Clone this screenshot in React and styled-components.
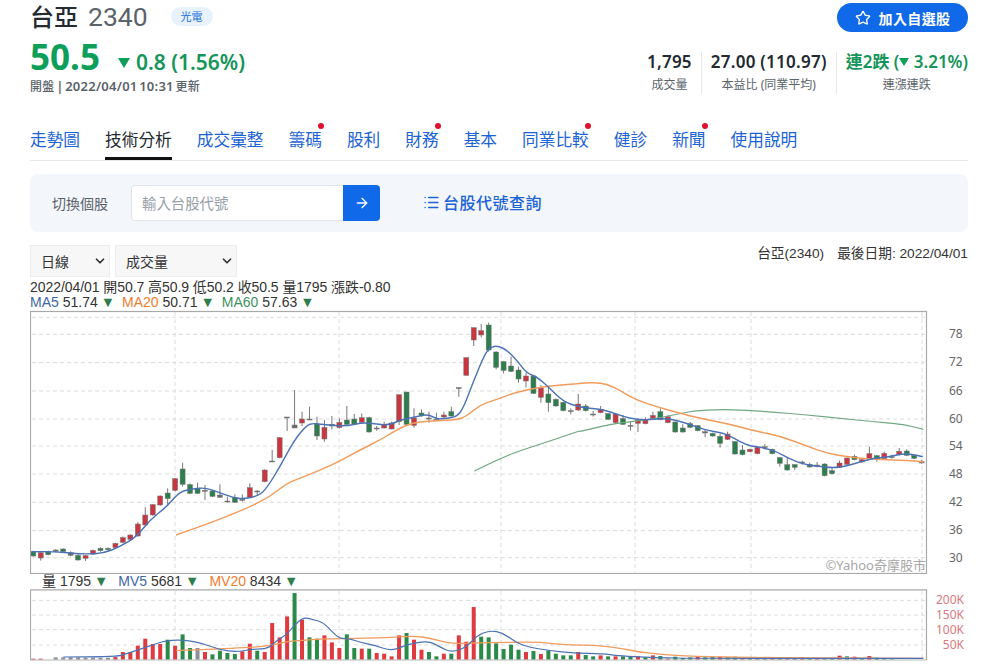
import React from 'react'
import styled, { createGlobalStyle } from 'styled-components'
import { Star, ArrowRight, List, ChevronDown } from 'lucide-react'

const RED = '#c8363f'
const GREEN = '#2e7d4c'
const BLUE_LINE = '#4b72b4'
const ORANGE_LINE = '#f29b5c'
const GREEN_LINE = '#6fa883'

const tabs = [
    { name: '走勢圖' },
    { name: '技術分析', active: true },
    { name: '成交彙整' },
    { name: '籌碼', dot: true },
    { name: '股利' },
    { name: '財務', dot: true },
    { name: '基本' },
    { name: '同業比較', dot: true },
    { name: '健診' },
    { name: '新聞', dot: true },
    { name: '使用說明' },
]

// candles: color, body top, body bottom, wick top, wick bottom (y is 3x screen px)
const candles = [
    ['g',724,738,722,740],['r',728,744,726,752],['g',724,734,722,736],['d',720,724,718,726],['g',717,725,715,727],
    ['d',728,736,724,739],['g',736,750,733,752],['r',737,745,735,753],['r',721,732,719,734],['g',715,722,712,725],
    ['g',715,719,712,722],['r',700,713,698,715],['r',683,697,679,700],['r',675,688,673,690],['r',642,678,636,680],
    ['r',615,645,592,647],['r',584,615,582,617],['r',558,585,556,587],['g',549,566,535,585],['r',506,541,504,545],
    ['g',477,523,458,530],['g',524,550,520,553],['g',535,550,518,552],['d',541,544,525,570],['g',543,559,540,561],
    ['d',555,562,523,564],['d',573,575,560,578],['g',563,577,553,579],['d',568,570,553,575],['r',533,562,520,564],
    ['d',543,546,540,558],['r',480,515,478,517],['d',453,456,420,456],['r',383,443,381,445],['d',321,324,321,363],
    ['d',345,354,240,354],['r',327,339,305,348],['d',327,330,290,330],['g',342,378,320,390],['r',352,387,330,395],
    ['d',343,348,318,358],['r',337,353,325,356],['g',330,343,288,348],['g',327,342,312,345],['r',323,337,310,340],
    ['g',323,366,320,368],['d',354,357,348,362],['r',344,354,335,356],['r',339,357,335,358],['r',254,335,254,345],
    ['g',246,343,246,345],['r',324,346,295,353],['g',309,316,298,320],['d',324,327,305,338],['d',328,331,308,333],
    ['r',315,321,305,325],['g',305,318,290,320],['d',233,236,233,260],['r',143,196,142,197],['r',53,90,52,108],
    ['r',62,75,42,82],['g',45,120,38,125],['g',126,172,124,178],['g',155,181,153,190],['g',168,184,140,186],
    ['g',180,207,170,218],['r',198,213,188,232],['g',198,250,196,252],['r',234,262,225,278],['g',252,278,230,305],
    ['g',268,288,265,290],['g',277,302,275,304],['d',302,305,295,313],['r',282,300,252,303],['g',288,302,282,305],
    ['d',312,314,303,320],['r',298,308,288,310],['g',311,328,309,330],['r',312,338,310,342],['g',326,343,315,345],
    ['d',346,349,335,362],['r',331,340,325,366],['r',330,341,322,343],['r',316,325,305,327],['g',305,329,295,331],
    ['r',320,338,316,340],['g',336,366,334,368],['g',354,366,343,368],['g',341,352,336,354],['g',347,362,345,364],
    ['d',365,369,360,382],['g',370,378,368,380],['g',379,400,372,413],['r',372,388,365,390],['g',395,432,393,434],
    ['g',420,434,405,436],['r',418,425,416,427],['r',412,431,410,433],['d',410,413,402,418],['g',418,431,416,433],
    ['g',443,460,441,470],['g',464,480,443,482],['g',464,472,462,480],['d',456,459,452,464],['g',463,471,458,473],
    ['d',465,470,456,472],['g',462,497,460,499],['g',482,491,472,494],['r',459,472,452,474],['r',444,463,442,465],
    ['g',439,449,434,451],['r',449,456,445,458],['r',431,446,410,448],['g',437,447,435,455],['r',430,446,425,448],
    ['d',440,442,434,446],['r',424,434,414,436],['g',423,436,418,438],['g',436,445,434,447],['d',455,459,450,461],
]

// volume bars: color + top (3x screen px, base is 270)
const volumes = [
    ['r',267],['r',267],['n',270],['d',263],['d',263],['d',263],['d',263],['d',264],['d',264],['d',264],['d',264],['r',262],
    ['r',247],['r',247],['r',228],['r',207],['r',223],['r',223],['g',210],['r',228],['g',194],['g',235],['d',235],['r',247],
    ['g',254],['g',243],['g',250],['g',253],['r',245],['r',222],['g',243],['r',247],['r',160],['r',203],['r',140],['g',70],
    ['r',150],['g',203],['g',207],['r',197],['r',218],['r',235],['g',194],['g',235],['r',237],['g',237],['r',250],['r',252],
    ['r',260],['r',197],['g',190],['r',210],['r',240],['g',247],['g',260],['r',252],['g',252],['r',197],['r',216],['r',112],
    ['g',201],['g',203],['g',221],['g',238],['g',225],['g',240],['r',247],['g',244],['r',253],['g',242],['g',252],['g',257],
    ['g',257],['r',247],['g',256],['g',260],['r',257],['g',260],['r',260],['g',260],['g',260],['r',260],['g',263],['r',257],
    ['g',259],['r',267],['g',261],['g',265],['g',263],['r',261],['g',263],['g',262],['r',261],['g',263],['g',261],['r',263],
    ['g',265],['r',266],['g',265],['r',266],['g',262],['r',263],['g',265],['r',262],['g',265],['r',264],['g',266],['g',265],
    ['r',258],['g',260],['r',261],['g',266],['r',259],['g',264],['g',266],['d',267],
]

// 3x crops of the reference, each with its own screen x origin
const ma5 = [
    [20, [[35,725],[100,724],[150,730],[200,732],[250,730],[300,710],[350,680],[390,630],[440,590],[470,555],[490,542],[520,537],[555,533],[590,545],[640,563],[670,567],[715,558],[740,535],[780,470],[820,395],[860,345]]],
    [300, [[40,340],[60,343],[95,346],[140,348],[190,337],[230,343],[270,345],[300,330],[340,322],[385,312],[410,328],[440,325],[470,320],[490,295],[520,215],[555,130],[575,110],[595,108],[620,120],[650,150],[680,190],[710,200],[745,230],[790,275]]],
    [580, [[0,292],[60,298],[90,305],[130,320],[175,330],[220,328],[265,325],[320,340],[375,360],[420,368],[445,375],[480,395],[510,408],[550,413],[590,425],[630,447],[670,463],[710,468],[760,474],[800,468],[840,456],[880,445],[920,442],[960,432],[990,432],[1028,440]]],
]
const ma20 = [
    [20, [[468,675],[540,650],[620,620],[690,590],[750,560],[800,520]]],
    [300, [[0,505],[60,480],[110,458],[180,420],[240,390],[290,360],[320,345],[360,335],[410,332],[470,330],[500,318],[540,285],[590,268],[640,250],[700,235],[750,228],[820,222]]],
    [580, [[0,220],[60,217],[100,230],[130,248],[170,270],[230,290],[300,310],[370,327],[440,340],[520,362],[600,378],[680,408],[740,430],[800,440],[860,446],[920,449],[1000,452],[1030,456]]],
]
const ma60 = [
    [300, [[523,483],[600,445],[680,415],[760,390],[840,362]]],
    [580, [[0,365],[60,350],[120,338],[200,330],[280,315],[340,303],[420,298],[500,301],[580,306],[680,315],[780,325],[880,335],[960,342],[1000,350],[1030,358]]],
]
const mv5 = [
    [20, [[130,262],[285,262],[320,252],[370,235],[400,225],[440,212],[500,211],[550,222],[600,240],[650,247],[700,238],[745,237],[770,212],[800,195],[820,170],[850,142],[880,150],[910,158],[940,190],[960,207]]],
    [340, [[30,207],[60,218],[105,227],[155,244],[200,225],[265,213],[300,232],[335,248],[380,232],[410,198],[450,182],[490,190],[530,220],[570,233],[630,243],[700,250],[790,252],[830,258],[900,262]]],
    [660, [[0,264],[100,266],[790,266]]],
]
const mv20 = [
    [20, [[468,243],[600,238],[745,230],[800,215],[850,212],[900,208]]],
    [340, [[0,207],[100,205],[170,203],[220,199],[270,205],[330,222],[400,220],[500,218],[600,217],[660,225],[790,228],[850,238],[900,247]]],
    [660, [[0,254],[100,260],[300,264],[790,266]]],
]

const priceTicks = [[78,334],[72,362],[66,391],[60,419],[54,446],[48,474],[42,502],[36,530],[30,558]]
const volumeTicks = [['200K',600],['150K',615],['100K',630],['50K',645]]
const priceGrid = [22,73,158,243,327,408,492,577,662,743]
const volumeGrid = [92,136,180,226]
const verticals = [175,339,501,635,751,922]

const candleX = (i) => 3.3 + 7.465 * i

// smooth path through the points, x/y already in svg px
const toPath = (segments, offsetY) => {
    const pts = segments.flatMap(([origin, list]) =>
        list.map(([x, y]) => [x / 3 + origin - 30, y / 3 + offsetY]))
    let d = `M${pts[0][0].toFixed(1)} ${pts[0][1].toFixed(1)}`
    for (let i = 1; i < pts.length - 1; i++) {
        const mx = (pts[i][0] + pts[i + 1][0]) / 2
        const my = (pts[i][1] + pts[i + 1][1]) / 2
        d += `Q${pts[i][0].toFixed(1)} ${pts[i][1].toFixed(1)} ${mx.toFixed(1)} ${my.toFixed(1)}`
    }
    const last = pts[pts.length - 1]
    return `${d}L${last[0].toFixed(1)} ${last[1].toFixed(1)}`
}

const Grid = ({ rows, bottom, offsetY }) => (
    <g stroke="#dcdcdc" strokeWidth="1" strokeDasharray="4 3">
        {rows.map((y) => <line key={y} x1="2" x2="896" y1={y / 3 + offsetY} y2={y / 3 + offsetY} />)}
        {verticals.map((x) => <line key={x} x1={x - 30} x2={x - 30} y1="2" y2={bottom} />)}
    </g>
)

const PriceChart = () => (
    <ChartSvg width="938" height="264" viewBox="0 0 938 264">
        <Grid rows={priceGrid} bottom={262} offsetY={0} />
        {candles.map(([c, top, bottom, hi, lo], i) => {
            const x = candleX(i)
            const fill = c === 'r' ? RED : c === 'g' ? GREEN : '#6b6b6b'
            return (
                <g key={i}>
                    <line x1={x} x2={x} y1={hi / 3} y2={lo / 3} stroke="#777" strokeWidth="1" />
                    <rect x={x - 2.5} y={top / 3} width="5" height={Math.max((bottom - top) / 3, 1)} fill={fill} stroke="#777" strokeWidth="0.5" />
                </g>
            )
        })}
        <path d={toPath(ma60, 0)} fill="none" stroke={GREEN_LINE} strokeWidth="1.2" />
        <path d={toPath(ma20, 0)} fill="none" stroke={ORANGE_LINE} strokeWidth="1.4" />
        <path d={toPath(ma5, 0)} fill="none" stroke={BLUE_LINE} strokeWidth="1.4" />
        <rect x="0.5" y="1.5" width="896" height="262" fill="none" stroke="#a9a9a9" strokeWidth="1.2" />
        <AxisText x="896" y="260" textAnchor="end" fontSize="13" fill="#a6a6a6">©Yahoo奇摩股市</AxisText>
        {priceTicks.map(([v, y]) => (
            <AxisText key={v} x="919" y={y - 310 + 4} fontSize="12" fill="#666">{v}</AxisText>
        ))}
    </ChartSvg>
)

const VolumeChart = () => (
    <ChartSvg width="938" height="78" viewBox="0 0 938 78">
        <Grid rows={volumeGrid} bottom={72} offsetY={-19.3} />
        {volumes.map(([c, top], i) => {
            if (c === 'n') return null
            const fill = c === 'r' ? '#de3a40' : c === 'g' ? '#2a8a48' : '#8b8f9c'
            const y = top / 3 - 19.3
            return <rect key={i} x={candleX(i) - 2} y={y} width="4" height={70.7 - y} fill={fill} />
        })}
        <path d={toPath(mv20, -19.3)} fill="none" stroke={ORANGE_LINE} strokeWidth="1.3" />
        <path d={toPath(mv5, -19.3)} fill="none" stroke={BLUE_LINE} strokeWidth="1.2" />
        <path d="M0.5 71V0.8H896.5V71" fill="none" stroke="#a9a9a9" strokeWidth="1.2" />
        <line x1="0" x2="896" y1="71" y2="71" stroke="#b5b5b5" />
        {volumeTicks.map(([v, y]) => (
            <AxisText key={v} x="934" y={y - 589 + 4} textAnchor="end" fontSize="12" fill="#d9787d">{v}</AxisText>
        ))}
    </ChartSvg>
)

const App = () => {
    return (
        <Page>
            <GlobalStyle />
            <Header>
                <div>
                    <TitleRow>
                        <Name>台亞</Name>
                        <Code>2340</Code>
                        <Tag>光電</Tag>
                    </TitleRow>
                    <PriceRow>
                        <Price>50.5</Price>
                        <Change><DownArrow />0.8 (1.56%)</Change>
                    </PriceRow>
                    <Updated><small>開盤</small> | 2022/04/01 10:31 <small>更新</small></Updated>
                </div>
                <HeaderRight>
                    <WatchButton><Star size={16} strokeWidth={2} />加入自選股</WatchButton>
                    <Stats>
                        <Stat>
                            <StatValue>1,795</StatValue>
                            <StatLabel>成交量</StatLabel>
                        </Stat>
                        <Stat>
                            <StatValue>27.00 (110.97)</StatValue>
                            <StatLabel>本益比 (同業平均)</StatLabel>
                        </Stat>
                        <Stat>
                            <StatValue $green>連2跌 (<SmallArrow /> 3.21%)</StatValue>
                            <StatLabel>連漲連跌</StatLabel>
                        </Stat>
                    </Stats>
                </HeaderRight>
            </Header>

            <Tabs>
                {tabs.map((tab) => (
                    <Tab key={tab.name} $active={tab.active}>
                        {tab.name}
                        {tab.dot && <Dot />}
                    </Tab>
                ))}
            </Tabs>

            <SearchPanel>
                <SearchLabel>切換個股</SearchLabel>
                <SearchInput placeholder="輸入台股代號" />
                <SearchButton><ArrowRight size={16} strokeWidth={2} /></SearchButton>
                <CodeLink><List size={17} strokeWidth={2} />台股代號查詢</CodeLink>
            </SearchPanel>

            <ChartBar>
                <Selects>
                    <Select $width={80}>日線<ChevronDown size={14} strokeWidth={3} /></Select>
                    <Select $width={122}>成交量<ChevronDown size={14} strokeWidth={3} /></Select>
                </Selects>
                <LastDate><span>台亞(2340)</span><span>最後日期: 2022/04/01</span></LastDate>
            </ChartBar>

            <InfoLine>2022/04/01 開50.7 高50.9 低50.2 收50.5 量1795 漲跌-0.80</InfoLine>
            <Legend>
                <LegendName $color="#3f66a8">MA5</LegendName> 51.74 <Tri>▼</Tri>
                <LegendName $color="#ee7d2f" $gap={8}>MA20</LegendName> 50.71 <Tri>▼</Tri>
                <LegendName $color="#3f9160" $gap={8}>MA60</LegendName> 57.63 <Tri>▼</Tri>
            </Legend>
            <PriceChart />

            <VolumeLegend>
                量 1795 <Tri>▼</Tri>
                <LegendName $color="#3f66a8" $gap={11}>MV5</LegendName> 5681 <Tri>▼</Tri>
                <LegendName $color="#ee7d2f" $gap={11}>MV20</LegendName> 8434 <Tri>▼</Tri>
            </VolumeLegend>
            <VolumeChart />
        </Page>
    )
}

export default App

const GlobalStyle = createGlobalStyle`
    html, body {
        margin: 0;
        padding: 0;
        background: #fff;
        overflow: hidden;
    }
    body {
        font-family: "Noto Sans", "Noto Sans CJK TC", sans-serif;
    }
`

const Page = styled.div`
    width: 938px;
    height: 667px;
    margin-left: 30px;
    overflow: hidden;
`

const Header = styled.div`
    display: flex;
    justify-content: space-between;
    height: 98px;
`

const TitleRow = styled.div`
    display: flex;
    align-items: center;
    height: 34px;
    padding-bottom: 1px;
    box-sizing: border-box;
`

const Name = styled.span`
    font-size: 24px;
    line-height: 32px;
    font-weight: 500;
    color: #232a31;
`

const Code = styled.span`
    font-family: Roboto, sans-serif;
    font-size: 26.5px;
    line-height: 32px;
    color: #5b636a;
    margin-left: 10px;
`

const Tag = styled.span`
    margin-left: 23px;
    width: 42px;
    height: 19px;
    line-height: 19px;
    text-align: center;
    border-radius: 10px;
    font-size: 11px;
    color: #1a6fe0;
    background: #e8f2fd;
`

const PriceRow = styled.div`
    display: flex;
    align-items: baseline;
    height: 46px;
`

const Price = styled.span`
    font-size: 35px;
    line-height: 46px;
    font-weight: 700;
    color: #0d9f5a;
`

const Change = styled.span`
    margin-left: 18px;
    font-size: 21px;
    font-weight: 600;
    color: #15955a;
`

const DownArrow = styled.i`
    display: inline-block;
    width: 0;
    height: 0;
    margin-right: 6px;
    vertical-align: 2px;
    border-left: 6.5px solid transparent;
    border-right: 6.5px solid transparent;
    border-top: 10px solid #0d9f5a;
`

const SmallArrow = styled.i`
    display: inline-block;
    width: 0;
    height: 0;
    vertical-align: 2px;
    border-left: 5px solid transparent;
    border-right: 5px solid transparent;
    border-top: 8px solid #0d9f5a;
`

const Updated = styled.div`
    font-size: 13px;
    line-height: 16px;
    margin-top: -2px;
    color: #5b636a;
    font-weight: 600;
    word-spacing: -2px;
    letter-spacing: 0.25px;

    small {
        font-size: 12px;
        font-weight: 500;
    }
`

const HeaderRight = styled.div`
    display: flex;
    flex-direction: column;
    align-items: flex-end;
    padding-top: 3px;
`

const WatchButton = styled.button`
    display: flex;
    align-items: center;
    justify-content: center;
    gap: 8px;
    width: 131px;
    height: 29px;
    padding: 0;
    border: 0;
    border-radius: 15px;
    background: #0f69e8;
    color: #fff;
    font-family: inherit;
    font-size: 14px;
    font-weight: 600;
    letter-spacing: 0.4px;
`

const Stats = styled.div`
    display: flex;
    margin-top: 20px;
`

const Stat = styled.div`
    display: flex;
    flex-direction: column;
    align-items: center;
    padding: 0 9px;
    border-left: 1px solid #e6e8ea;

    &:first-child {
        border-left: 0;
    }
    &:last-child {
        padding-right: 0;
    }
`

const StatValue = styled.div`
    font-size: 17px;
    line-height: 20px;
    font-weight: 600;
    white-space: nowrap;
    letter-spacing: ${(p) => (p.$green ? '0' : '0.25px')};
    color: ${(p) => (p.$green ? '#15955a' : '#232a31')};
`

const StatLabel = styled.div`
    margin-top: 4px;
    font-size: 12px;
    line-height: 18px;
    color: #5b636a;
`

const Tabs = styled.div`
    display: flex;
    gap: 25px;
    height: 43px;
    margin-top: 20px;
    box-sizing: border-box;
    border-bottom: 1px solid #e6e8ea;
`

const Tab = styled.div`
    position: relative;
    box-sizing: border-box;
    height: 42px;
    line-height: 43px;
    font-size: 16.7px;
    white-space: nowrap;
    color: ${(p) => (p.$active ? '#232a31' : '#1c63d5')};
    border-bottom: ${(p) => (p.$active ? '3px solid #111' : '0')};
`

const Dot = styled.i`
    position: absolute;
    top: 5px;
    right: -2px;
    width: 6px;
    height: 6px;
    border-radius: 50%;
    background: #e0102e;
`

const SearchPanel = styled.div`
    display: flex;
    align-items: center;
    height: 58px;
    margin-top: 13px;
    padding-left: 22px;
    border-radius: 8px;
    background: #f3f6fa;
`

const SearchLabel = styled.span`
    font-size: 14px;
    color: #5b636a;
    width: 79px;
`

const SearchInput = styled.input`
    width: 212px;
    height: 36px;
    box-sizing: border-box;
    padding: 0 10px;
    border: 1px solid #e0e4e9;
    border-right: 0;
    border-radius: 4px 0 0 4px;
    background: #fff;
    font-family: inherit;
    font-size: 14.4px;
    outline: none;

    &::placeholder {
        color: #979ea8;
    }
`

const SearchButton = styled.button`
    display: flex;
    align-items: center;
    justify-content: center;
    width: 37px;
    height: 36px;
    padding: 0;
    border: 0;
    border-radius: 0 4px 4px 0;
    background: #0f69e8;
    color: #fff;
`

const CodeLink = styled.a`
    display: flex;
    align-items: center;
    gap: 3px;
    margin-left: 43px;
    margin-top: -2px;
    font-size: 16px;
    font-weight: 500;
    letter-spacing: 0.5px;
    color: #1c63d5;
`

const ChartBar = styled.div`
    display: flex;
    justify-content: space-between;
    height: 32px;
    margin-top: 13px;
`

const Selects = styled.div`
    display: flex;
    gap: 5px;
`

const Select = styled.div`
    display: flex;
    align-items: center;
    justify-content: space-between;
    box-sizing: border-box;
    width: ${(p) => p.$width}px;
    height: 32px;
    padding: 0 2px 0 10px;
    border: 1px solid #ececec;
    background: #f7f7f7;
    font-size: 14px;
    color: #333;
`

const LastDate = styled.div`
    display: flex;
    gap: 13px;
    font-family: "Liberation Sans", "Noto Sans CJK TC", sans-serif;
    font-size: 13.7px;
    line-height: 18px;
    color: #333;
`

const Legend = styled.div`
    height: 15px;
    font-family: "Liberation Sans", "Noto Sans CJK TC", sans-serif;
    font-size: 14px;
    line-height: 15px;
    white-space: pre-wrap;
    color: #333;
`

const InfoLine = styled(Legend)`
    margin-top: 3px;
    letter-spacing: -0.06px;
`

const VolumeLegend = styled(Legend)`
    padding-left: 12px;
`

const LegendName = styled.span`
    color: ${(p) => p.$color};
    margin-left: ${(p) => p.$gap || 0}px;
`

const Tri = styled.span`
    margin: 0 -1px;
    color: #2e7d4c;
    font-size: 14.5px;
`

const ChartSvg = styled.svg`
    display: block;
`

const AxisText = styled.text`
    font-family: "Noto Sans", "Noto Sans CJK TC", sans-serif;
`
